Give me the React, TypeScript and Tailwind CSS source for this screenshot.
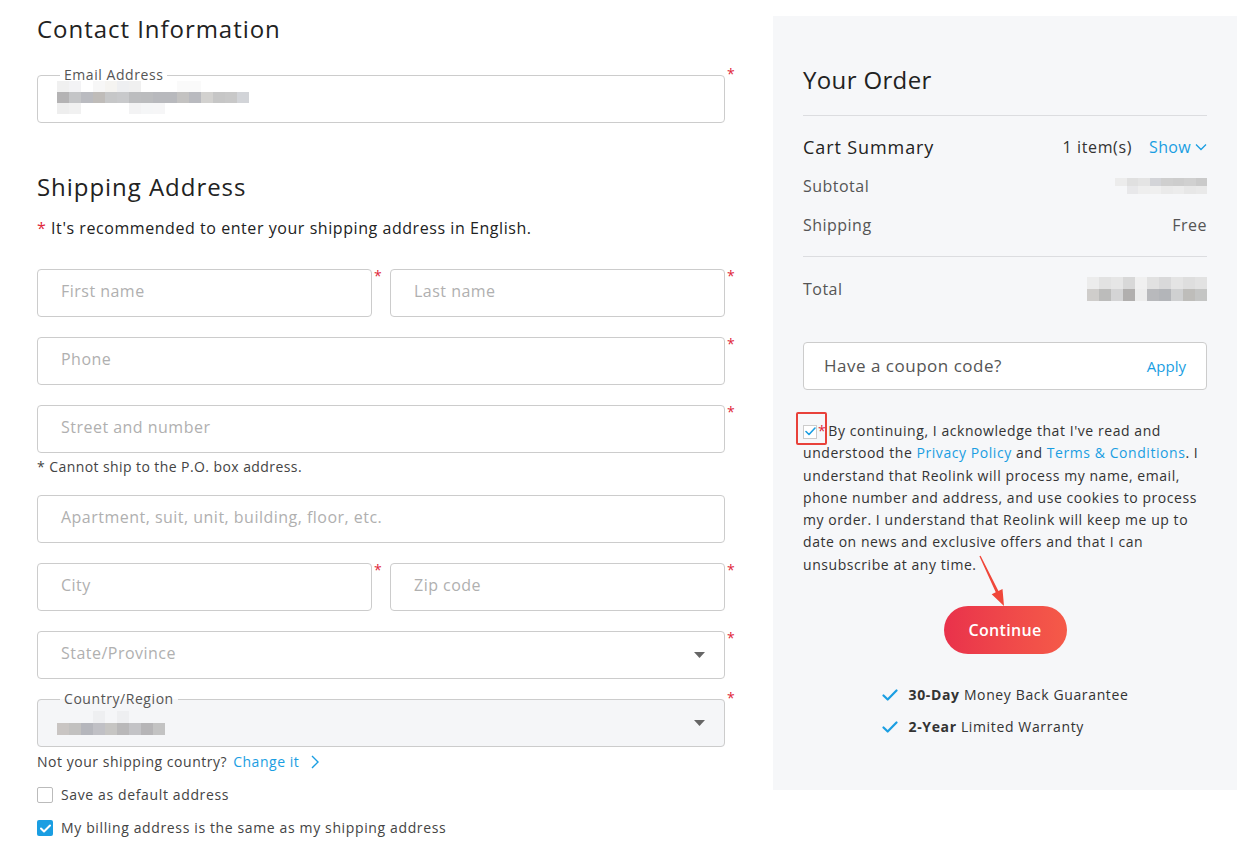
import React from "react";

const font = "font-['Open_Sans',sans-serif]";

// pixelated (blurred) value, rows of grey cells
function Pixels({ rows, cell }: { rows: string[][]; cell: string }) {
  return (
    <div className="flex flex-col">
      {rows.map((r, i) => (
        <div key={i} className="flex">
          {r.map((c, j) => (
            <div key={j} className={cell} style={{ backgroundColor: c }} />
          ))}
        </div>
      ))}
    </div>
  );
}

function Star({ hidden }: { hidden?: boolean }) {
  return (
    <span className="w-[18px] shrink-0 pl-[2px] text-[14px] leading-none text-[#e0283a]">{hidden ? "" : "*"}</span>
  );
}

function Caret() {
  return (
    <svg width="11" height="6" viewBox="0 0 11 6" className="shrink-0">
      <path d="M0 0h11L5.5 6z" fill="#666" />
    </svg>
  );
}

function Field({ placeholder, select, optional }: { placeholder: string; select?: boolean; optional?: boolean }) {
  return (
    <div className="flex flex-1">
      <div className="flex h-12 flex-1 items-center justify-between rounded border border-[#cccccc] bg-white pb-[4px] pl-[23px] pr-[19px]">
        <span className="text-[16px] tracking-[0.03em] text-[#b0b0b0]">{placeholder}</span>
        {select && (
          <div className="mt-[4px]">
            <Caret />
          </div>
        )}
      </div>
      <Star hidden={optional} />
    </div>
  );
}

function LegendField({ label, children, gray }: { label: string; children: React.ReactNode; gray?: boolean }) {
  return (
    <div className="flex">
      <fieldset
        className={`flex h-[56px] flex-1 items-center justify-between rounded border border-[#cccccc] pl-[19px] pr-[19px] ${gray ? "bg-[#f5f6f8]" : "bg-white"}`}
      >
        <legend className="ml-[3px] px-[4px] text-[14px] leading-4 tracking-[0.04em] text-[#555]">{label}</legend>
        {children}
      </fieldset>
      <Star />
    </div>
  );
}

function Check() {
  return (
    <svg width="16" height="12" viewBox="0 0 16 12">
      <path d="M1.5 6.5l4.2 4 8.8-9" fill="none" stroke="#1a9ee2" strokeWidth="2.2" strokeLinecap="round" strokeLinejoin="round" />
    </svg>
  );
}

export default function App() {
  const emailRows = [
    ["#f0f0f0", "#f3f3f5", "#fff", "#f7f7f7", "#f5f4f1", "#eeeff1", "#f0f0f0", "#fff", "#fff", "#fff", "#fafafa", "#fafafa", "#fff", "#fff", "#fff", "#fff"],
    ["#b4b3b4", "#c4c5c7", "#babbc0", "#bfbcb9", "#c6c7c8", "#c8c9cb", "#bcbdbf", "#bbbcbe", "#b8b9bd", "#b8b9bd", "#c3c2c1", "#b9babf", "#d2d1cf", "#c6c6c6", "#c8c8c8", "#d2d4d8"],
    ["#eeeeee", "#f1f1f1", "#fff", "#fff", "#fff", "#fff", "#f3f3f4", "#f5f6f7", "#f6f6f7", "#fff", "#fff", "#fff", "#fff", "#fff", "#fff", "#fff"],
  ];
  const countryRows = [
    ["#f5f6f8", "#f5f6f8", "#f5f6f8", "#eeeff1", "#f5f6f8", "#eeeff1", "#f5f6f8", "#f5f6f8", "#f5f6f8"],
    ["#c9c5c3", "#c2c1c0", "#b5b6bc", "#c0c0c5", "#c6c5c3", "#b9b8b9", "#c3c3c6", "#b6b5b7", "#c3c3c3"],
  ];
  const subRows = [
    ["#ececec", "#e0e0e0", "#e4e4e4", "#d3d4d8", "#cfcfcf", "#cdcdcd", "#d0d0d0", "#cacaca"],
    ["#f6f7f9", "#e8e8ea", "#eeeeee", "#efefef", "#eaeaea", "#ececec", "#e7e7e7", "#e9e9e9"],
  ];
  const totalRows = [
    ["#ececec", "#e2e2e2", "#e6e6e6", "#d8d8d8", "#f0f0f0", "#e1e1e1", "#d9d9da", "#e4e4e4", "#dedede", "#e2e2e2"],
    ["#cfcdcb", "#bcbcbb", "#d4d4d5", "#b1afae", "#ededed", "#b8b9bc", "#b3b5b9", "#cfd0d1", "#bebdba", "#c4c5c4"],
  ];

  return (
    <div className={`${font} flex min-h-[858px] bg-white pl-[37px] text-[#333]`}>
      {/* left column */}
      <div className="flex w-[706px] shrink-0 flex-col pt-[13px]">
        <h2 className="text-[24px] leading-8 tracking-[0.04em] text-[#222]">Contact Information</h2>
        <div className="mt-[22px]">
          <LegendField label="Email Address">
            <div className="-mt-[10px]">
              <Pixels rows={emailRows} cell="h-[11px] w-[12px]" />
            </div>
          </LegendField>
        </div>

        <h2 className="mt-[48px] text-[24px] leading-8 tracking-[0.04em] text-[#222]">Shipping Address</h2>
        <p className="mt-[13px] text-[16px] leading-6 tracking-[0.035em] text-[#222]">
          <span className="text-[#e0283a]">*</span> It's recommended to enter your shipping address in English.
        </p>

        <div className="mt-[29px] flex">
          <Field placeholder="First name" />
          <Field placeholder="Last name" />
        </div>
        <div className="mt-5 flex">
          <Field placeholder="Phone" />
        </div>
        <div className="mt-5 flex">
          <Field placeholder="Street and number" />
        </div>
        <p className="mt-1 text-[14px] leading-5 tracking-[0.03em] text-[#444]">* Cannot ship to the P.O. box address.</p>
        <div className="mt-[18px] flex">
          <Field placeholder="Apartment, suit, unit, building, floor, etc." optional />
        </div>
        <div className="mt-5 flex">
          <Field placeholder="City" />
          <Field placeholder="Zip code" />
        </div>
        <div className="mt-5 flex">
          <Field placeholder="State/Province" select />
        </div>
        <div className="mt-3">
          <LegendField label="Country/Region" gray>
            <div className="-mt-[8px]">
              <Pixels rows={countryRows} cell="h-[12px] w-[12px]" />
            </div>
            <div className="-mt-[8px]">
              <Caret />
            </div>
          </LegendField>
        </div>
        <div className="mt-[5px] flex items-center text-[14px] leading-5 tracking-[0.038em] text-[#444]">
          Not your shipping country?
          <span className="ml-[6px] text-[#1a9ee2]">Change it</span>
          <svg width="8" height="14" viewBox="0 0 8 14" className="ml-[12px]">
            <path d="M1 1l6 6-6 6" fill="none" stroke="#1a9ee2" strokeWidth="1.4" />
          </svg>
        </div>
        <label className="mt-[13px] flex items-center gap-[8px] text-[14px] leading-5 tracking-[0.045em] text-[#444]">
          <span className="h-4 w-4 rounded-[2px] border border-[#bbb] bg-white" />
          Save as default address
        </label>
        <label className="mt-[13px] flex items-center gap-[8px] text-[14px] leading-5 tracking-[0.045em] text-[#444]">
          <span className="flex h-4 w-4 items-center justify-center rounded-[2px] bg-[#1a9ee2]">
            <svg width="11" height="9" viewBox="0 0 11 9">
              <path d="M1 4.5l3 3 6-6" fill="none" stroke="#fff" strokeWidth="2" strokeLinecap="round" strokeLinejoin="round" />
            </svg>
          </span>
          My billing address is the same as my shipping address
        </label>
      </div>

      {/* right panel */}
      <div className="relative ml-[30px] mt-[16px] flex h-[774px] w-[464px] shrink-0 flex-col bg-[#f6f7f9] px-[30px] pt-[48px]">
        <h2 className="text-[24px] leading-8 tracking-[0.015em] text-[#222]">Your Order</h2>
        <div className="mt-[19px] border-t border-[#dcdde0]" />
        <div className="mt-[17px] flex items-center justify-between leading-7">
          <span className="text-[18px] font-medium tracking-[0.05em] text-[#222]">Cart Summary</span>
          <div className="flex items-center text-[16px]">
            <span className="tracking-[0.04em] text-[#333]">1 item(s)</span>
            <span className="ml-[17px] tracking-[0.02em] text-[#1a9ee2]">Show</span>
            <svg width="12" height="8" viewBox="0 0 12 8" className="ml-[4px]">
              <path d="M1 1.5l5 5 5-5" fill="none" stroke="#1a9ee2" strokeWidth="1.3" />
            </svg>
          </div>
        </div>
        <div className="mt-[13px] flex items-center justify-between text-[16px] leading-6 tracking-[0.03em] text-[#555]">
          <span>Subtotal</span>
          <Pixels rows={subRows} cell="h-[8px] w-[11.5px]" />
        </div>
        <div className="mt-[15px] flex items-center justify-between text-[16px] leading-6 tracking-[0.03em] text-[#555]">
          <span>Shipping</span>
          <span>Free</span>
        </div>
        <div className="mt-[19px] border-t border-[#dcdde0]" />
        <div className="mt-5 flex items-center justify-between text-[16px] leading-6 tracking-[0.03em] text-[#555]">
          <span>Total</span>
          <Pixels rows={totalRows} cell="h-[12px] w-[12px]" />
        </div>

        <div className="mt-[41px] flex h-12 items-center justify-between rounded border border-[#cccccc] bg-white pl-[20px] pr-[20px]">
          <span className="text-[17px] tracking-[0.03em] text-[#555]">Have a coupon code?</span>
          <span className="text-[15px] text-[#1a9ee2]">Apply</span>
        </div>

        <p className="mt-[30px] text-[14px] leading-[22.3px] tracking-[0.04em] text-[#333]">
          <span className="inline-flex h-[14px] w-[14px] items-center justify-center border border-[#ccc] bg-white align-[0px]">
            <svg width="11" height="9" viewBox="0 0 11 9">
              <path d="M1 4.5l3 3 6-6.5" fill="none" stroke="#1a9ee2" strokeWidth="1.6" strokeLinecap="round" strokeLinejoin="round" />
            </svg>
          </span>
          <span className="ml-[1px] mr-[2px] text-[#e0283a]">*</span>By continuing, I acknowledge that I've read and understood the{" "}
          <span className="text-[#1a9ee2]">Privacy Policy</span> and{" "}
          <span className="text-[#1a9ee2]">Terms &amp; Conditions</span>. I understand that Reolink will process my
          name, email, phone number and address, and use cookies to process my order. I understand that Reolink will
          keep me up to date on news and exclusive offers and that I can unsubscribe at any time.
        </p>

        <button className="mx-auto mt-[30px] h-12 w-[123px] shrink-0 rounded-full bg-gradient-to-r from-[#e9314b] to-[#f55a48] text-[16px] font-semibold tracking-[0.02em] text-white">
          Continue
        </button>

        <div className="mx-auto mt-[29px] flex flex-col gap-2 text-[14px] leading-6 tracking-[0.045em] text-[#333]">
          <div className="flex items-center">
            <Check />
            <span className="ml-[11px]">
              <b className="font-bold">30-Day</b> Money Back Guarantee
            </span>
          </div>
          <div className="flex items-center">
            <Check />
            <span className="ml-[11px]">
              <b className="font-bold">2-Year</b> Limited Warranty
            </span>
          </div>
        </div>

        {/* annotation: red box + arrow */}
        <div className="absolute left-[23px] top-[396px] h-[33px] w-[31px] rounded-[2px] border-2 border-[#e8413a]" />
        <svg width="40" height="60" viewBox="0 0 40 60" className="absolute left-[200px] top-[536px]">
          <polygon points="6.4,4.3 22.75,40.25 18.7,42.2 31,54 29.5,37 25.45,38.95 7.6,3.7" fill="#f0473a" />
        </svg>
      </div>
    </div>
  );
}
